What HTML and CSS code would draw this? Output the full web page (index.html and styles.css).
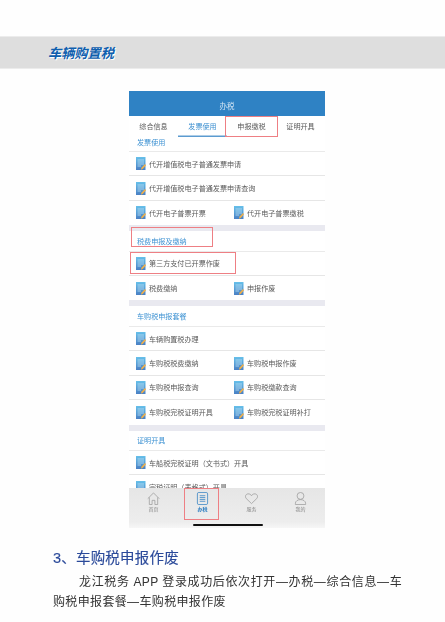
FILE: index.html
```html
<!DOCTYPE html>
<html lang="zh-CN">
<head>
    <meta charset="UTF-8">
    <meta name="viewport" content="width=device-width, initial-scale=1.0">
    <title>车辆购置税</title>
    <link rel="stylesheet" href="styles.css">
</head>
<body>

    <svg class="defs" width="0" height="0">
        <defs>
            <linearGradient id="doc-fill" x1="0" y1="0" x2="0" y2="1">
                <stop offset="0" stop-color="#66c0ea"/>
                <stop offset="1" stop-color="#4a80c4"/>
            </linearGradient>
            <symbol id="doc" viewBox="0 0 10 13">
                <rect width="9.500" height="13" fill="url(#doc-fill)"/>
                <path d="M1.500 3h6.500M1.500 5h6.500M1.500 7h6.500M1.500 9h3.500" stroke="#cfe9f7" stroke-width=".7"/>
                <path d="M5 12.700l.4-2L9 7l1 1.200-3.300 3.800z" fill="#f0ae48"/>
            </symbol>
        </defs>
    </svg>

    <header class="band">
        <h1>车辆购置税</h1>
    </header>

    <div class="phone">
        <div class="topbar">办税</div>
        <nav class="tabs">
            <span>综合信息</span>
            <span class="active">发票使用</span>
            <span>申报缴税</span>
            <span>证明开具</span>
        </nav>

        <h2 class="section first">发票使用</h2>
        <div class="row"><div class="item"><svg class="doc"><use href="#doc"/></svg>代开增值税电子普通发票申请</div></div>
        <div class="row"><div class="item"><svg class="doc"><use href="#doc"/></svg>代开增值税电子普通发票申请查询</div></div>
        <div class="row last">
            <div class="item"><svg class="doc"><use href="#doc"/></svg>代开电子普票开票</div>
            <div class="item"><svg class="doc"><use href="#doc"/></svg>代开电子普票缴税</div>
        </div>

        <div class="gap"></div>
        <h2 class="section">税费申报及缴纳</h2>
        <div class="row"><div class="item"><svg class="doc"><use href="#doc"/></svg>第三方支付已开票作废</div></div>
        <div class="row last">
            <div class="item"><svg class="doc"><use href="#doc"/></svg>税费缴纳</div>
            <div class="item"><svg class="doc"><use href="#doc"/></svg>申报作废</div>
        </div>

        <div class="gap"></div>
        <h2 class="section">车购税申报套餐</h2>
        <div class="row"><div class="item"><svg class="doc"><use href="#doc"/></svg>车辆购置税办理</div></div>
        <div class="row">
            <div class="item"><svg class="doc"><use href="#doc"/></svg>车购税税费缴纳</div>
            <div class="item"><svg class="doc"><use href="#doc"/></svg>车购税申报作废</div>
        </div>
        <div class="row">
            <div class="item"><svg class="doc"><use href="#doc"/></svg>车购税申报查询</div>
            <div class="item"><svg class="doc"><use href="#doc"/></svg>车购税缴款查询</div>
        </div>
        <div class="row last">
            <div class="item"><svg class="doc"><use href="#doc"/></svg>车购税完税证明开具</div>
            <div class="item"><svg class="doc"><use href="#doc"/></svg>车购税完税证明补打</div>
        </div>

        <div class="gap"></div>
        <h2 class="section">证明开具</h2>
        <div class="row"><div class="item"><svg class="doc"><use href="#doc"/></svg>车船税完税证明（文书式）开具</div></div>
        <div class="row"><div class="item"><svg class="doc"><use href="#doc"/></svg>完税证明（表格式）开具</div></div>

        <!-- Bottom tab bar sits over the list -->
        <footer class="tabbar">
            <div class="tab">
                <svg viewBox="0 0 14 14"><path d="M.8 7.200L7 1l6.200 6.200M2.500 5.800v7.700h3V9h3v4.500h3V5.800"/></svg>
                首页
            </div>
            <div class="tab current">
                <svg viewBox="0 0 14 14"><rect x="1.500" y=".5" width="11" height="13" rx="1.500"/><path d="M4 4h6M4 6h6M4 8h6M4 10h6"/></svg>
                办税
            </div>
            <div class="tab">
                <svg viewBox="0 0 14 14"><path d="M7 12.500L1.300 7C-.3 5 .6 2.300 3.200 2 5 1.800 6.300 2.800 7 4c.7-1.200 2-2.200 3.800-2 2.600.3 3.500 3 1.900 5z"/></svg>
                服务
            </div>
            <div class="tab">
                <svg viewBox="0 0 14 14"><circle cx="7" cy="4.200" r="3.700"/><path d="M1.500 13.500v-1.500C1.500 10 4 8.200 7 8.200s5.500 1.800 5.500 3.800v1.500z"/></svg>
                我的
            </div>
            <div class="home-bar"></div>
        </footer>

        <!-- Red annotation boxes -->
        <div class="mark mark-tab"></div>
        <div class="mark mark-section"></div>
        <div class="mark mark-row"></div>
        <div class="mark mark-nav"></div>
    </div>

    <section class="steps">
        <h2>3、车购税申报作废</h2>
        <p>龙江税务 APP 登录成功后依次打开—办税—综合信息—车购税申报套餐—车购税申报作废</p>
    </section>

</body>
</html>
```

FILE: styles.css
```css
* {
    box-sizing: border-box;
    margin: 0;
    padding: 0;
}

body {
    font-family: "Liberation Sans", "Noto Sans CJK SC", sans-serif;
    background-color: #fefefe;
    color: #333;
    overflow: hidden;
}

.defs {
    position: absolute;
}

/* Grey title band */
.band {
    margin-top: 36px;
    height: 33px;
    padding-left: 48px;
    display: flex;
    align-items: center;
    background-color: #dedede;
    border-top: 1px solid #ececec;
    border-bottom: 1px solid #ececec;
}

.band h1 {
    font-size: 13.200px;
    font-style: italic;
    font-weight: bold;
    color: #0f5fae;
    text-shadow: 1px 1px 0 #fff;
}

/* Phone screenshot */
.phone {
    position: relative;
    width: 196px;
    height: 437px;
    margin: 22px 0 0 129px;
    background-color: #fff;
    overflow: hidden;
    color: #5a5a5a;
    font-size: 7.100px;
    filter: blur(0.4px);
}

.topbar {
    height: 25px;
    padding-top: 3px;
    display: flex;
    align-items: center;
    justify-content: center;
    background-color: #2f82c4;
    color: #d6e7f5;
    font-size: 7.500px;
}

.tabs {
    height: 21px;
    display: grid;
    grid-template-columns: repeat(4, 49px);
}

.tabs span {
    display: flex;
    align-items: center;
    justify-content: center;
    padding-bottom: 2px;
}

.tabs .active {
    color: #3b8fd0;
    box-shadow: inset 0 -1.500px 0 #5c9bd0;
}

.section {
    height: 20.500px;
    padding: 0 0 0 8px;
    display: flex;
    align-items: center;
    border-bottom: 1px solid #eaeaea;
    color: #3f93d3;
    font-size: 7.100px;
    font-weight: normal;
}

.section.first {
    height: 15px;
    padding-bottom: 5px;
}

.row {
    height: 24.400px;
    padding-left: 7px;
    display: grid;
    grid-template-columns: 98px 1fr;
    align-items: center;
    border-bottom: 1px solid #e6e6e6;
}

.row.last {
    border-bottom: none;
}

.item {
    display: flex;
    align-items: center;
    gap: 3px;
    white-space: nowrap;
}

.doc {
    width: 10px;
    height: 13px;
    flex-shrink: 0;
}

.gap {
    height: 6px;
    background-color: #e9e9f0;
}

/* Tab bar */
.tabbar {
    position: absolute;
    left: 0;
    right: 0;
    bottom: 0;
    height: 40px;
    padding-top: 4px;
    display: grid;
    grid-template-columns: repeat(4, 1fr);
    align-content: start;
    background: linear-gradient(#e6e6e6, #ededed 85%, #f6f6f6);
}

.tab {
    display: flex;
    flex-direction: column;
    align-items: center;
    font-size: 5px;
    color: #888;
}

.tab svg {
    width: 13px;
    height: 13px;
    fill: none;
    stroke: #9a9a9a;
    stroke-width: 0.8;
}

.tab.current {
    color: #2f7fc2;
    font-weight: bold;
}

.tab.current svg {
    stroke: #2f7fc2;
}

.home-bar {
    position: absolute;
    left: 64px;
    bottom: 2px;
    width: 70px;
    height: 2.500px;
    border-radius: 2px;
    background-color: #111;
}

/* Red annotation boxes */
.mark {
    position: absolute;
    border: 1px solid #ee7f84;
}

.mark-tab {
    left: 96px;
    top: 25px;
    width: 53px;
    height: 21px;
}

.mark-section {
    left: 2px;
    top: 136px;
    width: 82px;
    height: 20px;
}

.mark-row {
    left: 1px;
    top: 161px;
    width: 106px;
    height: 22px;
}

.mark-nav {
    left: 55px;
    top: 397px;
    width: 35px;
    height: 32px;
}

/* Text under the screenshot */
.steps {
    padding: 20px 43px 0 53px;
    filter: blur(0.25px);
}

.steps h2 {
    font-size: 14.500px;
    font-weight: normal;
    line-height: 20px;
    letter-spacing: 0.2px;
    -webkit-text-stroke: 0.15px #2b4a9a;
    color: #2b4a9a;
}

.steps p {
    margin-top: 4px;
    font-size: 12px;
    line-height: 20px;
    letter-spacing: 0.35px;
    text-indent: 26px;
    text-align: justify;
    color: #333;
}
```
